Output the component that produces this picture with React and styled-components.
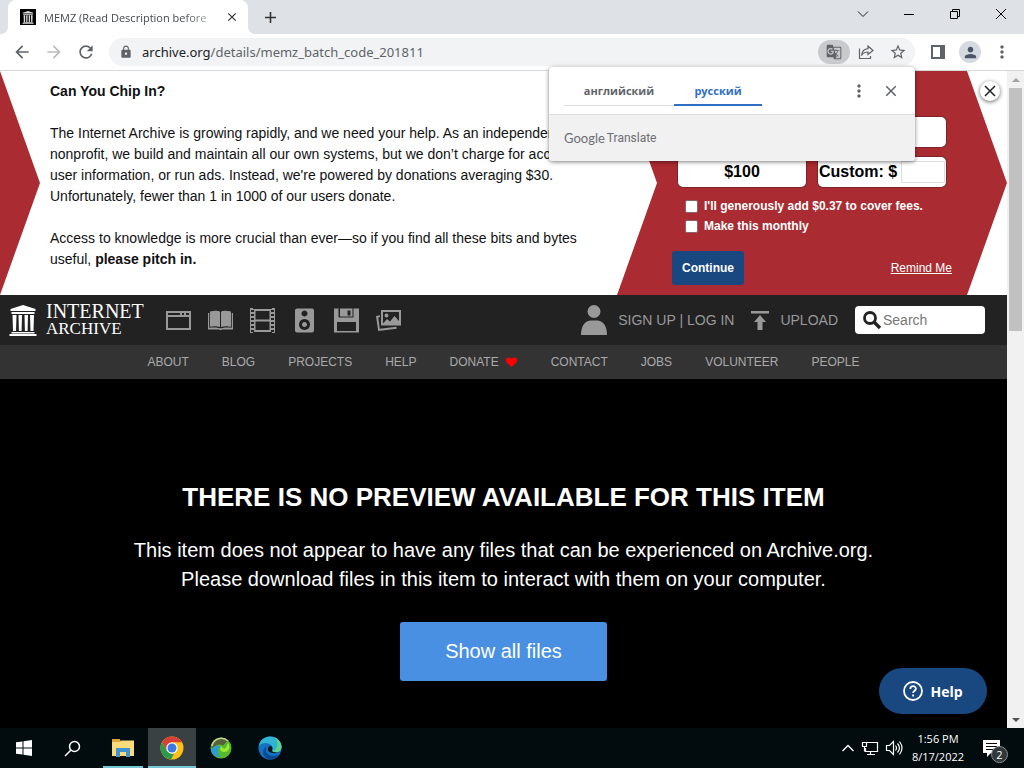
import React from "react";
import styled, { createGlobalStyle } from "styled-components";
import { MdArrowBack, MdArrowForward, MdRefresh, MdLock, MdGTranslate, MdStarBorder, MdMoreVert, MdPerson, MdClose, MdAdd } from "react-icons/md";

const ui = `"Open Sans", "Noto Sans", sans-serif`;
const sans = `"Liberation Sans", Arial, sans-serif`;
const red = "#aa2c32";
const blue = "#194880";

const Global = createGlobalStyle`
  * { box-sizing: border-box; }
  body { margin: 0; background: #000; font-family: ${sans}; }
  button { border: 0; padding: 0; background: none; color: inherit; font: inherit; cursor: pointer; }
  a { color: inherit; text-decoration: none; }
  h1, h2, p { margin: 0; }
  svg { display: block; flex: none; }
`;

const Desktop = styled.div`
  min-height: 100vh;
  display: flex;
  flex-direction: column;
`;

/* Browser window */
const TabStrip = styled.header`
  display: flex;
  height: 34px;
  padding-left: 8px;
  background: #dee1e6;
  font-family: ${ui};
`;
const Tab = styled.div`
  position: relative;
  display: flex;
  align-items: center;
  width: 240px;
  padding: 0 8px 0 12px;
  gap: 8px;
  border-radius: 8px 8px 0 0;
  background: #fff;
  color: #45494d;
  font-size: 11px;
  &::before, &::after {
    content: "";
    position: absolute;
    bottom: 0;
    width: 8px;
    height: 8px;
  }
  &::before { left: -8px; background: radial-gradient(circle at 0 0, transparent 8px, #fff 8px); }
  &::after { right: -8px; background: radial-gradient(circle at 100% 0, transparent 8px, #fff 8px); }
`;
const TabTitle = styled.span`
  flex: 1;
  overflow: hidden;
  white-space: nowrap;
  mask-image: linear-gradient(90deg, #000 80%, rgba(0, 0, 0, 0.3));
`;
const PlainButton = styled.button`
  display: flex;
  align-items: center;
  justify-content: center;
  width: ${(p) => p.$w || 32}px;
  height: ${(p) => p.$h || 28}px;
  border-radius: ${(p) => p.$round || 0}px;
  background: ${(p) => p.$bg || "transparent"};
  color: ${(p) => p.$color || "#5f6368"};
`;
const WindowControls = styled.div`
  display: flex;
  margin-left: auto;
`;
const Toolbar = styled.div`
  display: flex;
  align-items: center;
  height: 37px;
  padding: 0 6px;
  border-bottom: 1px solid #d5d7da;
  background: #fff;
`;
const Omnibox = styled.div`
  position: relative;
  display: flex;
  flex: 1;
  align-items: center;
  height: 28px;
  margin: 0 7px;
  padding: 0 1px 0 10px;
  border-radius: 14px;
  background: #f1f3f4;
`;
const Address = styled.div`
  flex: 1;
  padding-left: 9px;
  color: #5f6368;
  font: 13px/20px "Noto Sans", sans-serif;
  b { color: #202124; font-weight: 400; }
`;
const Avatar = styled.span`
  display: flex;
  align-items: center;
  justify-content: center;
  width: 22px;
  height: 22px;
  border-radius: 50%;
  background: #d5dae1;
  color: #4a5568;
`;

/* Translate bubble */
const Bubble = styled.section`
  position: absolute;
  z-index: 5;
  top: 29px;
  right: 0;
  width: 366px;
  border-radius: 4px;
  background: #fff;
  box-shadow: 0 1px 4px rgba(0, 0, 0, 0.5);
  font-family: ${ui};
  overflow: hidden;
`;
const BubbleTop = styled.div`
  display: flex;
  align-items: center;
  height: 48px;
  padding: 0 8px 0 15px;
  border-bottom: 1px solid #dadce0;
`;
const Languages = styled.div`
  display: flex;
  flex: 1;
  align-self: flex-end;
  margin-bottom: 8px;
`;
const Language = styled.button`
  width: ${(p) => (p.$active ? 88 : 110)}px;
  height: 30px;
  border-bottom: ${(p) => (p.$active ? "2px solid #2f6fc4" : "1px solid #dadce0")};
  color: ${(p) => (p.$active ? "#2f6fc4" : "#5f6368")};
  font-size: 11px;
  font-weight: 700;
`;
const BubbleFoot = styled.div`
  display: flex;
  align-items: center;
  gap: 2px;
  height: 46px;
  padding-left: 15px;
  background: #f1f1f1;
  color: #6b6e72;
  font: 12px Roboto, sans-serif;
  b { font: 13px Lato, sans-serif; }
`;

/* Page viewport */
const Viewport = styled.div`
  display: flex;
  flex: 1;
`;
const Page = styled.main`
  position: relative;
  display: flex;
  flex: 1;
  flex-direction: column;
  min-width: 0;
`;
const Scrollbar = styled.div`
  display: flex;
  flex-direction: column;
  align-items: center;
  width: 17px;
  background: #f1f1f1;
`;
const ScrollArrow = styled.span`
  display: flex;
  align-items: center;
  justify-content: center;
  height: 17px;
  color: ${(p) => p.$color};
`;
const Thumb = styled.div`
  width: 13px;
  height: 37%;
  margin-bottom: auto;
  background: #c1c1c1;
`;

/* Donation banner */
const Banner = styled.section`
  position: relative;
  display: flex;
  min-height: 224px;
  background: #fff;
`;
const BannerArrow = styled.div`
  width: 40px;
  background: ${red};
  clip-path: polygon(0 0, 100% 50%, 0 100%);
`;
const Appeal = styled.div`
  display: flex;
  flex: 1;
  flex-direction: column;
  gap: 21px;
  padding: 10px 10px 0;
  color: #111;
  font-size: 14px;
  line-height: 21px;
  h2 { font-size: inherit; }
`;
const DonateForm = styled.form`
  width: 390px;
  padding: 46px 55px 10px;
  background: ${red};
  clip-path: polygon(0 0, 350px 0, 100% 50%, 350px 100%, 0 100%, 40px 50%);
  color: #fff;
  font-size: 12px;
  font-weight: 700;
`;
const Amounts = styled.div`
  display: grid;
  grid-template-columns: 128px 128px;
  gap: 10px 12px;
  padding-left: 6px;
`;
const Amount = styled.button`
  height: 30px;
  border-radius: 5px;
  box-shadow: 0 0 0 1px #7c2429;
  background: #fff;
  color: #000;
  font-size: 16px;
`;
const CustomAmount = styled.label`
  display: flex;
  align-items: center;
  justify-content: space-between;
  height: 30px;
  padding: 0 1px;
  border-radius: 5px;
  box-shadow: 0 0 0 1px #7c2429;
  background: #fff;
  color: #000;
  font-size: 16px;
  input {
    width: 44px;
    height: 22px;
    border: 1px solid #ddd;
  }
`;
const Options = styled.div`
  display: flex;
  flex-direction: column;
  padding: 9px 0 15px 13px;
`;
const Option = styled.label`
  display: flex;
  align-items: center;
  gap: 6px;
  height: 20px;
  input {
    appearance: none;
    width: 13px;
    height: 13px;
    margin: 0;
    border: 1px solid #8b6468;
    border-radius: 2px;
    background: #fff;
  }
`;
const FormActions = styled.div`
  display: flex;
  align-items: center;
  justify-content: space-between;
  a { font-weight: 400; text-decoration: underline; }
`;
const Continue = styled.button`
  width: 72px;
  height: 34px;
  border-radius: 3px;
  background: ${blue};
`;
const CloseBanner = styled.button`
  position: absolute;
  top: 10px;
  right: 7px;
  display: flex;
  align-items: center;
  justify-content: center;
  width: 20px;
  height: 20px;
  border-radius: 50%;
  background: #fff;
  box-shadow: 0 1px 4px rgba(0, 0, 0, 0.6);
  color: #222;
`;

/* Archive navigation */
const MainNav = styled.nav`
  display: flex;
  align-items: center;
  height: 50px;
  padding: 0 22px 0 9px;
  background: #222;
  color: #999;
  font-size: 14px;
`;
const Brand = styled.a`
  display: flex;
  align-items: center;
  gap: 9px;
  width: 148px;
  color: #fff;
`;
const Wordmark = styled.span`
  display: flex;
  flex-direction: column;
  font: 20px/18px "Liberation Serif", serif;
  span { font-size: 17px; }
`;
const MediaLinks = styled.div`
  display: flex;
  a {
    display: flex;
    justify-content: center;
    width: 42px;
  }
`;
const NavLink = styled.a`
  display: flex;
  align-items: center;
  gap: 11px;
  margin-right: ${(p) => p.$after}px;
`;
const NavRight = styled.div`
  display: flex;
  align-items: center;
  margin-left: auto;
`;
const SearchBox = styled.label`
  display: flex;
  align-items: center;
  gap: 1px;
  width: 130px;
  height: 28px;
  padding-left: 7px;
  border-radius: 4px;
  background: #fff;
  color: #222;
  input {
    flex: 1;
    min-width: 0;
    border: 0;
    padding: 0;
    background: none;
    font: 14px ${sans};
  }
  input::placeholder { color: #777; }
`;
const SubNav = styled.nav`
  display: flex;
  align-items: center;
  justify-content: center;
  gap: 33px;
  height: 34px;
  background: #333;
  color: #aaa;
  font-size: 12px;
  a { display: flex; align-items: center; gap: 6px; }
`;

/* Item theatre */
const Theatre = styled.section`
  display: flex;
  flex: 1;
  flex-direction: column;
  align-items: center;
  padding: 101px 20px 47px;
  background: #000;
  color: #fff;
  text-align: center;
  h1 { font-size: 26px; line-height: 34px; }
  p { max-width: 780px; margin: 22px 0 28px; font-size: 20px; line-height: 29px; }
`;
const ShowFiles = styled.button`
  width: 207px;
  height: 59px;
  border-radius: 3px;
  background: #4990e2;
  font-size: 20px;
`;
const HelpButton = styled.button`
  position: absolute;
  right: 20px;
  bottom: 14px;
  display: flex;
  align-items: center;
  justify-content: center;
  gap: 7px;
  width: 108px;
  height: 46px;
  border-radius: 23px;
  background: ${blue};
  color: #fff;
  font: 700 14px ${ui};
`;

/* Taskbar */
const Taskbar = styled.footer`
  display: flex;
  height: 40px;
  background: #020c0f;
  color: #fff;
  font: 11px/18px ${ui};
`;
const Apps = styled.div`
  display: flex;
  gap: 1px;
  padding-left: 3px;
`;
const TaskButton = styled.button`
  position: relative;
  display: flex;
  align-items: center;
  justify-content: center;
  width: 48px;
  background: ${(p) => (p.$active ? "#3a4143" : "transparent")};
  &::after {
    content: "";
    position: absolute;
    bottom: 0;
    left: ${(p) => (p.$active ? 0 : 4)}px;
    right: ${(p) => (p.$active ? 0 : 4)}px;
    height: 2px;
    background: ${(p) => (p.$open ? "#76c7d4" : "transparent")};
  }
`;
const Tray = styled.div`
  display: flex;
  align-items: center;
  gap: 6px;
  margin-left: auto;
  padding-right: 24px;
`;
const Clock = styled.time`
  display: flex;
  flex-direction: column;
  width: 58px;
  align-items: center;
  white-space: nowrap;
`;
const Notices = styled.button`
  position: relative;
  margin-left: 10px;
  span {
    position: absolute;
    left: 8px;
    top: 6px;
    width: 17px;
    height: 17px;
    border: 1px solid #8b9092;
    border-radius: 50%;
    background: #30383a;
    font-size: 11px;
    line-height: 15px;
  }
`;

const Temple = ({ w, h }) => (
  <svg width={w} height={h} viewBox="0 0 27 31" fill="currentColor">
    <path d="M13.500 0 26 4v2H1V4zM2 7h23v2H2zM3 10h4l-.5 16h-3zM9 10h3.500l-.4 16H9.400zM15 10h3.500l-.4 16h-2.700zM20.500 10h4l-.5 16h-3zM2 27h23v1.500H2zM0 29h27v2H0z" />
  </svg>
);

const mediaIcons = [
  ["Web", <path fillRule="evenodd" d="M0 3h25v19H0zM2 9v11h21V9zM2 5v2h12V5zM16 5v2h2V5zM20 5v2h3V5z" />],
  ["Texts", <path d="M2 3.500c4-1 8-1 10 .2V19c-3-1-7-1-10-.3zM23 3.500c-4-1-8-1-10 .2V19c3-1 7-1 10-.3zM0 5h1.200v14.800c4-.6 8-.6 10.300.4h2c2.300-1 6.300-1 10.300-.4V5H25v16.500H14l-1.500.7-1.500-.7H0z" />],
  ["Video", <path fillRule="evenodd" d="M0 0h3v1h19V0h3v25h-3v-1H3v1H0zM5.500 3v8.500h14V3zM5.500 13.500V22h14v-8.500zM1 2v2h3V2zM1 6v2h3V6zM1 10v2h3v-2zM1 14v2h3v-2zM1 18v2h3v-2zM1 22v2h3v-2zM21 2v2h3V2zM21 6v2h3V6zM21 10v2h3v-2zM21 14v2h3v-2zM21 18v2h3v-2zM21 22v2h3v-2z" />],
  ["Audio", <path fillRule="evenodd" d="M5 .500h15a2 2 0 0 1 2 2v20a2 2 0 0 1-2 2H5a2 2 0 0 1-2-2v-20a2 2 0 0 1 2-2zM12.500 2.500a3 3 0 1 0 .01 0zM12.500 11a5.500 5.500 0 1 0 .01 0zM12.500 14a2.500 2.500 0 1 1-.01 0z" />],
  ["Software", <path fillRule="evenodd" d="M0 .500h25v24H0zM4.500.500v9h15v-9zM6 .500h12.500V8.500H6zM13.500 2.500h3v5h-3zM3 14v9h19v-9z" />],
  ["Images", <path fillRule="evenodd" d="M5 2h20v15.500H5zM7 4v11.500l4-4.500 3 2.500L18.500 8l4.500 5V4zM10.500 5.500a2 2 0 1 0 .01 0zM0 8l4-.8v1.900l-1.700.3 1.500 11.300 16.700-2 .2 2L2.200 23z" />],
];

const menu = ["ABOUT", "BLOG", "PROJECTS", "HELP", "DONATE", "CONTACT", "JOBS", "VOLUNTEER", "PEOPLE"];

const Line = ({ d, size = 16, w = 1 }) => (
  <svg width={size} height={size} viewBox={`0 0 ${size} ${size}`} fill="none" stroke="currentColor" strokeWidth={w}><path d={d} /></svg>
);

const Favicon = styled.span`
  display: flex;
  align-items: center;
  justify-content: center;
  width: 16px;
  height: 16px;
  background: #000;
  color: #ddd;
`;

export default function App() {
  return (
    <Desktop>
      <Global />
      <TabStrip>
        <Tab>
          <Favicon><Temple w={12} h={13} /></Favicon>
          <TabTitle>MEMZ (Read Description before</TabTitle>
          <PlainButton $w={16} $color="#333" aria-label="Close tab"><MdClose size={14} /></PlainButton>
        </Tab>
        <PlainButton $w={44} $h={34} $color="#333" aria-label="New tab"><MdAdd size={19} /></PlainButton>
        <WindowControls>
          <PlainButton $w={46} $color="#222" aria-label="Search tabs"><Line d="M3 5.500 8 10.500 13 5.500" /></PlainButton>
          <PlainButton $w={46} $color="#000" aria-label="Minimize"><Line d="M3 8.500H13" /></PlainButton>
          <PlainButton $w={46} $color="#000" aria-label="Restore"><Line d="M3.500 5.500h7v7h-7zM5.500 5.500v-2h7v7h-2" /></PlainButton>
          <PlainButton $w={46} $color="#000" aria-label="Close"><Line d="M3 3 13 13M13 3 3 13" /></PlainButton>
        </WindowControls>
      </TabStrip>
      <Toolbar>
        <PlainButton aria-label="Back"><MdArrowBack size={20} /></PlainButton>
        <PlainButton $color="#babcbe" aria-label="Forward"><MdArrowForward size={20} /></PlainButton>
        <PlainButton aria-label="Reload"><MdRefresh size={20} /></PlainButton>
        <Omnibox>
          <MdLock size={14} color="#5f6368" />
          <Address role="textbox" tabIndex={0} aria-label="Address"><b>archive.org</b>/details/memz_batch_code_201811</Address>
          <PlainButton $h={24} $round={12} $bg="#c8cacc" aria-label="Translate this page"><MdGTranslate size={16} /></PlainButton>
          <PlainButton aria-label="Share"><Line w={1.2} d="M1.500 4.500v10h11V12M10 2l5 4.500-5 4V8C7 8 5 9 3.500 11.500 4 7.500 6.500 5 10 4.700z" /></PlainButton>
          <PlainButton aria-label="Bookmark"><MdStarBorder size={18} /></PlainButton>
          <Bubble>
            <BubbleTop>
              <Languages>
                <Language>английский</Language>
                <Language $active>русский</Language>
              </Languages>
              <PlainButton aria-label="Translate options"><MdMoreVert size={20} /></PlainButton>
              <PlainButton aria-label="Close translate"><MdClose size={18} /></PlainButton>
            </BubbleTop>
            <BubbleFoot><b>Google</b><span>Translate</span></BubbleFoot>
          </Bubble>
        </Omnibox>
        <PlainButton aria-label="Side panel">
          <svg width="14" height="14" viewBox="0 0 14 14" fill="#5f6368"><path fillRule="evenodd" d="M0 0h14v14H0zM2 2v10h7V2z" /></svg>
        </PlainButton>
        <PlainButton aria-label="Profile"><Avatar><MdPerson size={17} /></Avatar></PlainButton>
        <PlainButton aria-label="Menu"><MdMoreVert size={20} /></PlainButton>
      </Toolbar>

      <Viewport>
        <Page>
          <Banner>
            <BannerArrow />
            <Appeal>
              <h2>Can You Chip In?</h2>
              <p>
                The Internet Archive is growing rapidly, and we need your help. As an independent nonprofit, we build and
                maintain all our own systems, but we don’t charge for access, sell user information, or run ads. Instead,
                we're powered by donations averaging $30. Unfortunately, fewer than 1 in 1000 of our users donate.
              </p>
              <p>
                Access to knowledge is more crucial than ever—so if you find all these bits and bytes useful,{" "}
                <strong>please pitch in.</strong>
              </p>
            </Appeal>
            <DonateForm>
              <Amounts>
                <Amount type="button">$25</Amount>
                <Amount type="button">$50</Amount>
                <Amount type="button">$100</Amount>
                <CustomAmount>Custom: $<input type="text" /></CustomAmount>
              </Amounts>
              <Options>
                <Option><input type="checkbox" />I'll generously add $0.37 to cover fees.</Option>
                <Option><input type="checkbox" />Make this monthly</Option>
              </Options>
              <FormActions>
                <Continue type="button">Continue</Continue>
                <a href="#remind">Remind Me</a>
              </FormActions>
            </DonateForm>
            <CloseBanner aria-label="Close banner"><Line size={12} w={1.500} d="M1 1 11 11M11 1 1 11" /></CloseBanner>
          </Banner>

          <MainNav>
            <Brand href="#home">
              <Temple w={28} h={31} />
              <Wordmark>INTERNET<span>ARCHIVE</span></Wordmark>
            </Brand>
            <MediaLinks>
              {mediaIcons.map(([name, shape]) => (
                <a key={name} href={`#${name}`} aria-label={name}>
                  <svg width="25" height="25" viewBox="0 0 25 25" fill="#999">{shape}</svg>
                </a>
              ))}
            </MediaLinks>
            <NavRight>
              <NavLink href="#login" $after={17}>
                <svg width="26" height="30" viewBox="0 0 26 30" fill="#999"><circle cx="13" cy="6.500" r="6.500" /><path d="M0 30c0-9 4-14 9-14.500h8c5 .5 9 5.500 9 14.500z" /></svg>
                SIGN UP | LOG IN
              </NavLink>
              <NavLink href="#upload" $after={17}>
                <svg width="18" height="19" viewBox="0 0 18 19" fill="#999"><path d="M0 0h18v2.500H0zM9 4l6 7h-3.500v8h-5v-8H3z" /></svg>
                UPLOAD
              </NavLink>
              <SearchBox>
                <svg width="20" height="20" viewBox="0 0 20 20" fill="none" stroke="#222" strokeWidth="2.800"><circle cx="8" cy="8" r="5.500" /><path strokeWidth="3.400" d="m12 12 6 6" /></svg>
                <input type="search" placeholder="Search" aria-label="Search" />
              </SearchBox>
            </NavRight>
          </MainNav>
          <SubNav>
            {menu.map((item) => (
              <a key={item} href={`#${item.toLowerCase()}`}>
                {item}
                {item === "DONATE" && (
                  <svg width="13" height="10" viewBox="0 0 13 10" fill="#f00"><path d="M6.500 10 2 6C-.5 3.500 1 .500 3.500.500 5 .500 6 1 6.500 2 7 1 8 .500 9.500.500c2.500 0 4 3 1.500 5.500z" /></svg>
                )}
              </a>
            ))}
          </SubNav>

          <Theatre>
            <h1>THERE IS NO PREVIEW AVAILABLE FOR THIS ITEM</h1>
            <p>
              This item does not appear to have any files that can be experienced on Archive.org.
              <br />
              Please download files in this item to interact with them on your computer.
            </p>
            <ShowFiles>Show all files</ShowFiles>
          </Theatre>
          <HelpButton>
            <svg width="20" height="20" viewBox="0 0 20 20" fill="none" stroke="#fff" strokeWidth="1.800"><circle cx="10" cy="10" r="9" /><path d="M7.300 8c0-3.700 5.600-3.600 5.600-.3 0 2-2.800 2.200-2.800 4.400M10.100 13.600v2" /></svg>
            Help
          </HelpButton>
        </Page>
        <Scrollbar>
          <ScrollArrow $color="#a3a3a3"><svg width="8" height="4" viewBox="0 0 8 4" fill="currentColor"><path d="M0 4 4 0l4 4z" /></svg></ScrollArrow>
          <Thumb />
          <ScrollArrow $color="#505050"><svg width="8" height="4" viewBox="0 0 8 4" fill="currentColor"><path d="M0 0h8L4 4z" /></svg></ScrollArrow>
        </Scrollbar>
      </Viewport>

      <Taskbar>
        <TaskButton aria-label="Start">
          <svg width="16" height="16" viewBox="0 0 16 16" fill="#fff"><path d="M0 2.300 6.500 1.400v6.100H0zM7.500 1.200 16 0v7.500H7.500zM0 8.500h6.500v6.100L0 13.700zM7.500 8.500H16V16l-8.500-1.200z" /></svg>
        </TaskButton>
        <TaskButton aria-label="Search"><Line w={1.500} size={17} d="M6.500 10.500 1 16M15.500 6.500a5 5 0 1 1-10 0 5 5 0 0 1 10 0z" /></TaskButton>
        <Apps>
          <TaskButton $open aria-label="File Explorer">
            <svg width="22" height="20" viewBox="0 0 22 20"><path fill="#e0a63a" d="M0 2h8l2 2h12v14H0z" /><path fill="#f8dc7c" d="M0 4h8l1.500-1.500H22V18H0z" /><path fill="#e0a63a" d="M0 1h8v3H0z" /><path fill="#4193cf" d="M4 10h14v9h-4v-5H8v5H4z" /></svg>
          </TaskButton>
          <TaskButton $active $open aria-label="Chrome">
            <svg width="24" height="24" viewBox="0 0 24 24"><circle cx="12" cy="12" r="11.500" fill="#fbc116" /><path fill="#d93f35" d="M2 6.200A11.500 11.500 0 0 1 22 6.300H12L7 15z" /><path fill="#2b9a4b" d="M2 6.200 7 15l5 2.700 2 .1-3 5.600A11.500 11.500 0 0 1 2 6.200z" /><circle cx="12" cy="12" r="5.700" fill="#fff" /><circle cx="12" cy="12" r="4.500" fill="#3a78e7" /></svg>
          </TaskButton>
          <TaskButton aria-label="Web browser">
            <svg width="22" height="22" viewBox="0 0 22 22"><circle cx="11" cy="11" r="10.500" fill="#56b92d" /><path fill="#55613b" d="M1.500 9A10 10 0 0 1 18 3.500l-5 5C8 6 4 9 2 13z" /><path fill="none" stroke="#c1cf8f" strokeWidth="1.500" d="M2 9A9.500 9.500 0 0 1 18 4" /><path fill="#2d9cd2" d="M1 13c3-5 8-5 9.500-2.500C8 11 7 15 10 20 5 20.500 1.500 17 1 13z" /><path fill="#9bea2b" d="M18 6c3 4 1 9-4 9-4 0-5-4-2.500-6 .5 3 4 3.500 5 .5z" /></svg>
          </TaskButton>
          <TaskButton aria-label="Edge">
            <svg width="24" height="24" viewBox="0 0 24 24"><circle cx="12" cy="12" r="11.500" fill="#1372c4" /><path fill="#2fb4d5" d="M.8 10C2 4 6.500.500 12 .500c7 0 11.500 5 11.500 10 0 4-3 6-6.500 6-3 0-4-1-2.500-3C15.500 8 6 4 .8 10z" /><path fill="#62d18e" d="M17 1.700c4 2 6.500 5.500 6.500 9 0 4-3 5.800-6.500 5.800-2 0-3-.6-3-1.500 6-1 7-8 3-13.300z" /><path fill="#0b4b91" d="M9 10c-4 6 2 13 12.500 8.500C18 23.500 13 24 10 23 4 21 3.500 13 9 10z" /><path fill="#07151d" d="M12.500 9.500c-3 1.500-3.500 5-1 6.500 2.500 1.500 7 1.500 9.500 0-3 .6-7 .4-7-1.500.8-1.500.8-4-1.500-5z" /></svg>
          </TaskButton>
        </Apps>
        <Tray>
          <Line size={14} w={1.400} d="M1.500 10 7 4.500 12.500 10" />
          <Line size={18} w={1.200} d="M6 3.500h10.500v9H4.500V9M9.500 12.500v3M6 15.500h8M1.500 3.500h4v4h-4zM3.500 7.500v5" />
          <Line size={18} w={1.200} d="M1.500 6.500h3l4-4v13l-4-4h-3zM10.500 6.500q2 2.500 0 5M12.500 4.500q4 4.500 0 9M14.500 2.500q5 6.500 0 13" />
          <Clock><span>1:56 PM</span><span>8/17/2022</span></Clock>
          <Notices aria-label="2 notifications">
            <svg width="17" height="17" viewBox="0 0 17 17" fill="#fff"><path fillRule="evenodd" d="M0 0h17v13H8l-4 4v-4H0zM3 3v1h11V3zM3 6v1h11V6zM3 9v1h8V9z" /></svg>
            <span>2</span>
          </Notices>
        </Tray>
      </Taskbar>
    </Desktop>
  );
}
